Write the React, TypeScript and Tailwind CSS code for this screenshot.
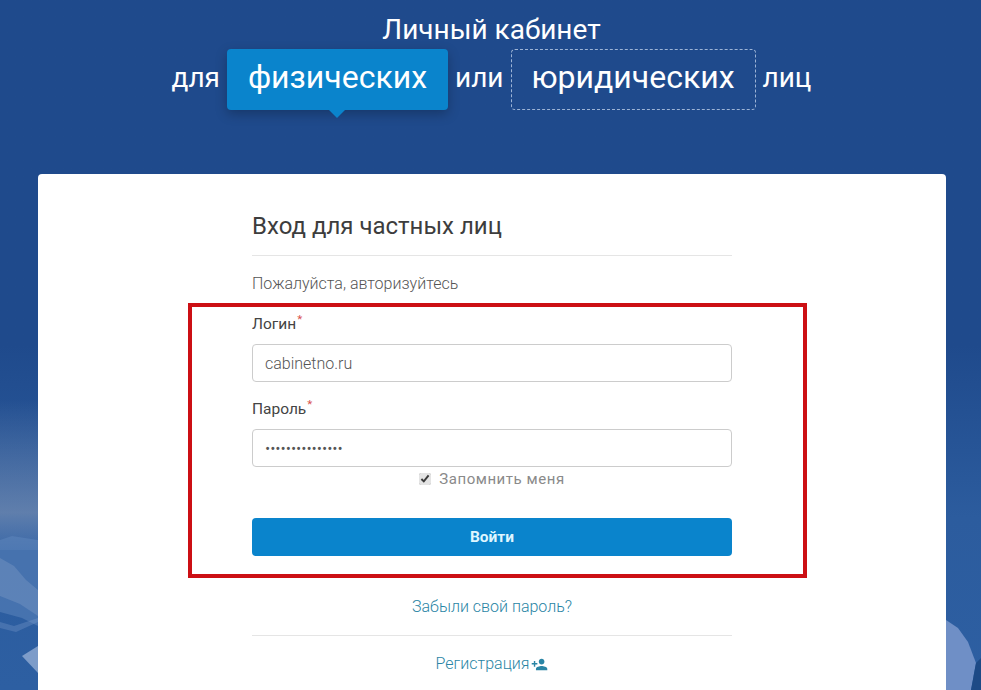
import { MdPersonAdd } from 'react-icons/md'

function Mountains() {
  return (
    <svg className="absolute left-0 top-[400px] h-[290px] w-[981px]" viewBox="0 0 981 290" fill="none">
      <defs>
        <linearGradient id="haze" x1="0" y1="0" x2="0" y2="1">
          <stop offset="0" stopColor="#8a9bb8" stopOpacity="0" />
          <stop offset="0.75" stopColor="#8a9bb8" stopOpacity="0.55" />
          <stop offset="1" stopColor="#6f90c0" stopOpacity="0.25" />
        </linearGradient>
      </defs>
      <rect x="0" y="0" width="40" height="150" fill="url(#haze)" />
      <path d="M0 140 L12 136 L38 140 L38 226 L22 218 L0 212 Z" fill="#5f87bd" opacity="0.5" />
      <path d="M0 158 L14 166 L26 180 L38 190 L38 216 L20 204 L0 196 Z" fill="#86a0c9" opacity="0.35" />
      <path d="M0 222 L14 226 L38 218 L38 222 L16 232 L0 228 Z" fill="#86a2cf" opacity="0.3" />
      <path d="M22 256 L38 246 L38 273 Z" fill="#9fb6da" opacity="0.7" />
      <path d="M946 220 L958 228 L968 242 L976 263 L971 290 L946 290 Z" fill="#6f8fc6" />
      <path d="M976 263 L981 258 L981 290 L971 290 Z" fill="#1d4a86" />
    </svg>
  )
}

function Field({ label, value, type }: { label: string; value: string; type: string }) {
  return (
    <div>
      <label className="block h-[21px] text-[15.5px] leading-[21px] text-[#444]">
        {label}
        <sup className="ml-px text-[#d9534f]">*</sup>
      </label>
      <input
        readOnly
        type={type}
        value={value}
        className="mt-[9px] block h-[38px] w-full rounded border border-[#ccc] bg-white px-3 text-[16px] font-light text-[#555] outline-none"
      />
    </div>
  )
}

export default function App() {
  return (
    <div className="relative h-[690px] overflow-hidden bg-gradient-to-b from-[#1f4a8c] from-50% via-[#2c5c9e] via-75% to-[#2d5fa2] font-['Roboto',sans-serif]">
      <Mountains />

      <div className="relative pl-[2px] pt-[14px] text-center text-[28px] leading-[32px] text-white">
        Личный кабинет
      </div>
      <div className="relative mt-[3px] flex items-center justify-center gap-[7px] pl-[2px] text-[28px] text-white">
        <span className="pb-[4px]">для</span>
        <div className="relative flex h-[61px] w-[221px] items-center justify-center rounded bg-[#0a84cc] pb-[5px] text-[32px] shadow-[0_4px_12px_rgba(0,0,0,0.25)]">
          физических
          <span className="absolute -bottom-[8px] left-1/2 -ml-[8px] border-x-[8px] border-t-[8px] border-x-transparent border-t-[#0a84cc]" />
        </div>
        <span className="pb-[4px]">или</span>
        <div className="flex h-[61px] w-[245px] items-center justify-center rounded border border-dashed border-[#9db4d6] pb-[5px] text-[32px]">
          юридических
        </div>
        <span className="pb-[4px]">лиц</span>
      </div>

      <div className="relative ml-[38px] mt-[64px] h-[600px] w-[908px] rounded bg-white pt-[35px]">
        <div className="mx-auto w-[480px]">
          <h2 className="border-b border-[#e5e5e5] pb-[12px] text-[24px] leading-[34px] text-[#3d3d3d]">
            Вход для частных лиц
          </h2>
          <p className="mt-[18px] h-[20px] text-[16px] font-light leading-[20px] text-[#555]">
            Пожалуйста, авторизуйтесь
          </p>
          <div className="mt-[20px] flex flex-col gap-[17px]">
            <Field label="Логин" value="cabinetno.ru" type="text" />
            <Field label="Пароль" value="cabinetno.ru123" type="password" />
          </div>
          <label className="mt-[2px] flex h-[20px] items-center justify-center gap-2 text-[15px] tracking-[0.55px] text-[#8a8a8a]">
            <input
              readOnly
              type="checkbox"
              checked
              className="h-3 w-3 accent-[#e4e4e4]"
            />
            Запомнить меня
          </label>
          <button className="mt-[29px] block h-[38px] w-full rounded bg-[#0a84cc] pt-[2px] text-[15.5px] font-bold text-[#dff6ff]">
            Войти
          </button>
          <a className="mt-[41px] block text-center text-[16px] font-light leading-[20px] text-[#2a85a5]">
            Забыли свой пароль?
          </a>
          <div className="mt-[18px] border-t border-[#e5e5e5] pt-[16px] text-center">
            <a className="inline-flex items-center gap-0.5 text-[16px] font-light leading-[20px] text-[#2a85a5]">
              Регистрация
              <MdPersonAdd className="h-[17px] w-[17px]" />
            </a>
          </div>
        </div>
      </div>

      <div className="absolute left-[188px] top-[303px] h-[275px] w-[619px] border-4 border-[#cc0f14]" />
    </div>
  )
}
